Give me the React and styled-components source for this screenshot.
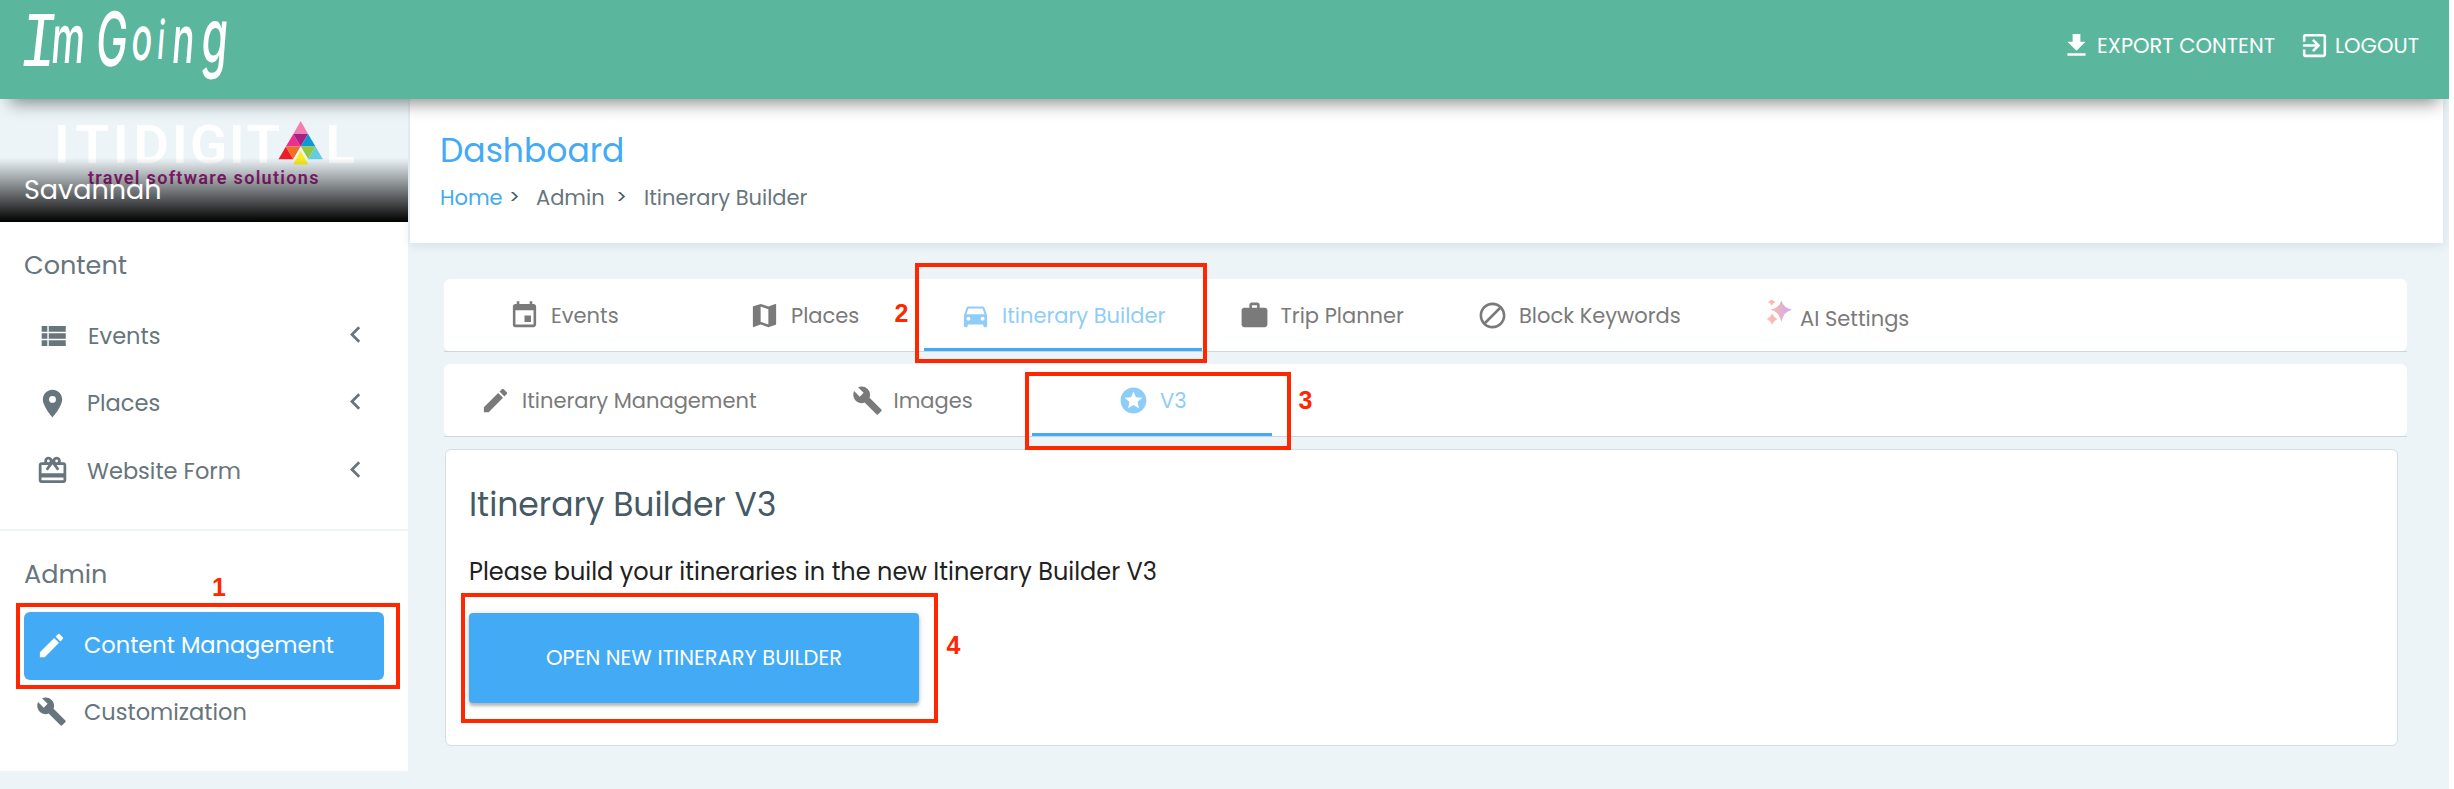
import React from 'react';
import styled, { createGlobalStyle, css } from 'styled-components';
import {
  MdPlace, MdCardGiftcard, MdChevronLeft, MdEdit, MdBuild, MdEvent, MdMap,
  MdDirectionsCar, MdWork, MdBlock, MdStars, MdExitToApp,
} from 'react-icons/md';

const GlobalStyle = createGlobalStyle`
  * { box-sizing: border-box; }
  body {
    margin: 0;
    background: #ffffff;
    font-family: Poppins, Inter, "Liberation Sans", sans-serif;
    font-feature-settings: 'cv11';
  }
`;

const Page = styled.div`
  position: relative;
  width: 2449px;
  height: 789px;
  overflow: hidden;
  background: #ecf4f8;
`;

const Header = styled.header`
  position: relative;
  z-index: 2;
  display: flex;
  justify-content: space-between;
  height: 99px;
  padding-right: 30px;
  background: #5ab69d;
  box-shadow: 0 14px 16px -10px rgba(0, 0, 0, 0.45);
`;

const HeaderActions = styled.nav`
  display: flex;
  align-items: center;
  gap: 24px;
  height: 90px;
`;

const HeaderLink = styled.a`
  display: flex;
  align-items: center;
  gap: 5px;
  color: #ffffff;
  font-size: 21px;
  white-space: nowrap;
`;

const Columns = styled.div`
  display: flex;
  align-items: flex-start;
`;

const Sidebar = styled.aside`
  width: 408px;
  height: 672px;
  background: #ffffff;
  color: #67757c;
`;

const Profile = styled.div`
  position: relative;
  display: flex;
  flex-direction: column;
  justify-content: flex-end;
  height: 123px;
  background: #ecf4f8;
`;

const ProfileLogo = styled.svg`
  position: absolute;
  top: 0;
  left: 0;
`;

const ProfileName = styled.div`
  position: relative;
  height: 64px;
  padding-left: 24px;
  line-height: 64px;
  font-size: 27px;
  color: #ffffff;
  background: linear-gradient(rgba(0, 0, 0, 0), #000000);
`;

const SectionTitle = styled.div`
  display: flex;
  align-items: center;
  height: ${(p) => p.$height}px;
  padding: 6px 0 0 24px;
  font-size: 25.5px;
`;

const MenuItem = styled.div`
  display: flex;
  align-items: center;
  height: 67.5px;
  margin: 0 24px;
  padding: 0 12px 0 12px;
  gap: 18px;
  font-size: 22.5px;

  svg:last-child {
    margin: -3px 0 0 auto;
  }
`;

const AdminItem = styled.div`
  display: flex;
  align-items: center;
  height: ${(p) => (p.$active ? 68 : 65)}px;
  margin: 0 24px;
  padding: 0 11px 2px 11.5px;
  gap: 17.5px;
  border-radius: 6px;
  font-size: 22.5px;
  ${(p) => p.$active && css`
    background: #43aaf5;
    color: #ffffff;
  `}
`;

const Divider = styled.div`
  height: 2px;
  margin-top: 24.5px;
  background: #ecf4f8;
`;

const Main = styled.main`
  width: 2033px;
  margin-left: 2px;
`;

const TitlePanel = styled.section`
  height: 144px;
  padding: 32px 30px 0;
  background: #ffffff;
  box-shadow: 0 2px 10px rgba(69, 90, 100, 0.14);
`;

const PageTitle = styled.h1`
  margin: 0;
  font-size: 33px;
  font-weight: 400;
  line-height: 40px;
  color: #43aaf5;
`;

const Breadcrumb = styled.div`
  display: flex;
  align-items: center;
  height: 30px;
  margin-top: 11px;
  font-size: 21px;
  color: #67757c;
`;

const Crumb = styled.span`
  width: ${(p) => p.$width}px;
  color: ${(p) => p.$link ? '#43aaf5' : 'inherit'};
  white-space: nowrap;
`;

const Separator = styled.span`
  width: ${(p) => p.$width}px;
  font-size: 20px;
  color: #455a64;
`;

const Content = styled.div`
  display: flex;
  flex-direction: column;
  gap: 12px;
  padding: 36px 36px 0 34px;
`;

const TabBarLine = styled.div`
  border-bottom: 1px solid #cdd6da;
`;

const TabBar = styled.div`
  display: flex;
  height: 72px;
  border-radius: 6px;
  background: #ffffff;
`;

const Tab = styled.div`
  display: flex;
  align-items: center;
  gap: 11px;
  width: ${(p) => p.$width}px;
  padding: 3px 0 0 ${(p) => p.$pad}px;
  border-bottom: 3px solid ${(p) => p.$active ? '#43aaf5' : 'transparent'};
  color: ${(p) => p.$active ? '#8fcdf9' : '#7a7a7a'};
  font-size: 21px;
  white-space: nowrap;
`;

const LowLabel = styled.span`
  margin-left: -5px;
  padding-top: 6px;
`;

const Card = styled.section`
  width: 1953px;
  height: 297px;
  margin-left: 1px;
  padding: 35px 23px 0;
  border: 1px solid #d5dee2;
  border-radius: 6px;
  background: #ffffff;
`;

const CardTitle = styled.h2`
  margin: 0;
  font-size: 33px;
  font-weight: 400;
  line-height: 40px;
  color: #455a64;
`;

const CardText = styled.p`
  margin: 32px 0 0;
  font-size: 24px;
  line-height: 30px;
  color: #212121;
`;

const OpenButton = styled.button`
  display: block;
  width: 450px;
  height: 90px;
  margin-top: 26px;
  padding: 0 0 1px;
  border: 0;
  border-radius: 4px;
  background: #43aaf5;
  box-shadow: 0 3px 3px rgba(0, 0, 0, 0.22), 0 1px 7px rgba(0, 0, 0, 0.14);
  color: #ffffff;
  font: inherit;
  font-size: 21px;
`;

// tutorial marks drawn over the page
const MarkBox = styled.div`
  position: absolute;
  z-index: 3;
  left: ${(p) => p.$x}px;
  top: ${(p) => p.$y}px;
  width: ${(p) => p.$w}px;
  height: ${(p) => p.$h}px;
  border: 4px solid #ff2600;
`;

const MarkNumber = styled.div`
  position: absolute;
  z-index: 3;
  left: ${(p) => p.$x}px;
  top: ${(p) => p.$y}px;
  font: bold 25px/25px "Liberation Sans", Arial, sans-serif;
  color: #ff2600;
`;

const BrandLogo = () => (
  <svg width="250" height="99" fill="#ffffff" fontFamily="Inter" fontWeight="500">
    <g transform="scale(0.8 1) skewX(-8)">
      <text x="31" y="66" fontSize="79" fontFamily="Liberation Mono">I</text>
    </g>
    <g transform="scale(0.56 1) skewX(-8)">
      <text x="98" y="63" fontSize="67">m</text>
      <text x="178" y="66" fontSize="75">G</text>
      <text x="241" y="60" fontSize="61">o</text>
      <text x="287" y="59" fontSize="54">i</text>
      <text x="314" y="63" fontSize="66">n</text>
      <text x="366" y="63" fontSize="76">g</text>
    </g>
  </svg>
);

const ItiLogo = () => (
  <ProfileLogo width="408" height="123" viewBox="0 99 408 123" fontFamily="Roboto">
    <text x="54 75.5 113 133.5 172 190 229 246.5 325.5" y="162.5" fontSize="54.5" fontWeight="600" fill="#ffffff">ITIDIGITL</text>
    <path d="M300.7 121l7.4 13h-14.8z" fill="#f27fb2" />
    <path d="M293.3 134l7.4 12.6h-14.8z" fill="#ee2f92" />
    <path d="M293.3 134h14.8l-7.4 12.6z" fill="#a81f85" />
    <path d="M308.1 134l7.4 12.6h-14.8z" fill="#0a99d3" />
    <path d="M285.9 146.6l7.4 12.7h-14.8z" fill="#ec1c2b" />
    <path d="M285.9 146.6h14.8l-7.4 12.7z" fill="#f37021" />
    <path d="M300.7 146.6h14.8l-7.4 12.7z" fill="#94c93d" />
    <path d="M315.5 146.6l7.4 12.7h-14.8z" fill="#66cbe3" />
    <path d="M300.7 146.6l7.6 13h-15.2z" fill="#ecf4f8" />
    <path d="M300.7 151l7.6 13.6h-15.2z" fill="#fbed21" />
    <text x="88" y="183.5" fontSize="18" fontWeight="600" letterSpacing="1.3" fill="#a8228a">travel software solutions</text>
  </ProfileLogo>
);

const ListIcon = () => (
  <svg width="34" height="34" viewBox="0 0 24 24" fill="currentColor">
    <path d="M4 14h4v-4H4v4zm0 5h4v-4H4v4zM4 9h4V5H4v4zm5 5h12v-4H9v4zm0 5h12v-4H9v4zM9 5v4h12V5H9z" />
  </svg>
);

const DownloadIcon = () => (
  <svg width="31" height="31" viewBox="0 0 24 24" fill="currentColor">
    <path d="M19 9h-4V3H9v6H5l7 7 7-7zM5 18v2h14v-2H5z" />
  </svg>
);

const SparkleIcon = () => (
  <svg width="31" height="31" viewBox="0 0 31 31">
    <defs>
      <linearGradient id="sparkle" gradientUnits="userSpaceOnUse" x1="7" y1="0" x2="29" y2="0">
        <stop offset="0" stopColor="#fdbcb0" />
        <stop offset="0.45" stopColor="#e9b3c6" />
        <stop offset="1" stopColor="#c4a9f5" />
      </linearGradient>
    </defs>
    <g fill="url(#sparkle)">
      <path d="M18.3 0.6q2.3 7.500 10.700 9.200-8.400 1.700-10.700 12.200-2.300-10.500-10.700-12.200 8.400-1.700 10.700-9.200z" />
      <path d="M8.700 -2.200q0.900 3.200 3.900 4.100-3 0.900-3.900 4.100-0.900-3.200-3.900-4.100 3-0.900 3.900-4.100z" />
      <path d="M9.100 13.300q1.700 4.300 5.600 5.800-3.900 1.500-5.600 5.800-1.700-4.300-5.600-5.800 3.900-1.500 5.600-5.800z" />
    </g>
  </svg>
);

const menu = [
  { label: 'Events', icon: <ListIcon /> },
  { label: 'Places', icon: <MdPlace size={33} /> },
  { label: 'Website Form', icon: <MdCardGiftcard size={33} /> },
];

const mainTabs = [
  { label: 'Events', icon: <MdEvent size={31} />, width: 240, pad: 65 },
  { label: 'Places', icon: <MdMap size={31} />, width: 240, pad: 65 },
  { label: 'Itinerary Builder', icon: <MdDirectionsCar size={31} />, width: 278, pad: 36, active: true },
  { label: 'Trip Planner', icon: <MdWork size={31} />, width: 240, pad: 36.5 },
  { label: 'Block Keywords', icon: <MdBlock size={31} />, width: 276, pad: 35 },
];

const subTabs = [
  { label: 'Itinerary Management', icon: <MdEdit size={31} />, width: 348, pad: 36 },
  { label: 'Images', icon: <MdBuild size={31} />, width: 240, pad: 59.5 },
  { label: 'V3', icon: <MdStars size={31} />, width: 240, pad: 86, active: true },
];

const renderTab = (tab) => (
  <Tab key={tab.label} $width={tab.width} $pad={tab.pad} $active={tab.active}>
    {tab.icon}
    <span>{tab.label}</span>
  </Tab>
);

const App = () => {
  return (
    <Page>
      <GlobalStyle />
      <Header>
        <BrandLogo />
        <HeaderActions>
          <HeaderLink><DownloadIcon />EXPORT CONTENT</HeaderLink>
          <HeaderLink><MdExitToApp size={31} />LOGOUT</HeaderLink>
        </HeaderActions>
      </Header>
      <Columns>
        <Sidebar>
          <Profile>
            <ItiLogo />
            <ProfileName>Savannah</ProfileName>
          </Profile>
          <SectionTitle $height={80}>Content</SectionTitle>
          {menu.map((item) => (
            <MenuItem key={item.label}>
              {item.icon}
              <span>{item.label}</span>
              <MdChevronLeft size={33} />
            </MenuItem>
          ))}
          <Divider />
          <SectionTitle $height={81}>Admin</SectionTitle>
          <AdminItem $active><MdEdit size={31} />Content Management</AdminItem>
          <AdminItem><MdBuild size={31} />Customization</AdminItem>
        </Sidebar>
        <Main>
          <TitlePanel>
            <PageTitle>Dashboard</PageTitle>
            <Breadcrumb>
              <Crumb $link $width={69}>Home</Crumb>
              <Separator $width={27}>&gt;</Separator>
              <Crumb $width={80}>Admin</Crumb>
              <Separator $width={28}>&gt;</Separator>
              <Crumb>Itinerary Builder</Crumb>
            </Breadcrumb>
          </TitlePanel>
          <Content>
            <TabBarLine>
              <TabBar>
                {mainTabs.map(renderTab)}
                <Tab $width={240} $pad={45}>
                  <SparkleIcon />
                  <LowLabel>AI Settings</LowLabel>
                </Tab>
              </TabBar>
            </TabBarLine>
            <TabBarLine>
              <TabBar>{subTabs.map(renderTab)}</TabBar>
            </TabBarLine>
            <Card>
              <CardTitle>Itinerary Builder V3</CardTitle>
              <CardText>Please build your itineraries in the new Itinerary Builder V3</CardText>
              <OpenButton>OPEN NEW ITINERARY BUILDER</OpenButton>
            </Card>
          </Content>
        </Main>
      </Columns>
      <MarkBox $x={16} $y={602.5} $w={384} $h={86.5} />
      <MarkNumber $x={212} $y={575}>1</MarkNumber>
      <MarkBox $x={914.5} $y={263} $w={292.5} $h={100} />
      <MarkNumber $x={894.5} $y={301}>2</MarkNumber>
      <MarkBox $x={1025} $y={372} $w={266} $h={77.5} />
      <MarkNumber $x={1298.5} $y={388}>3</MarkNumber>
      <MarkBox $x={461} $y={593} $w={477} $h={130} />
      <MarkNumber $x={946.5} $y={633}>4</MarkNumber>
    </Page>
  );
};

export default App;
